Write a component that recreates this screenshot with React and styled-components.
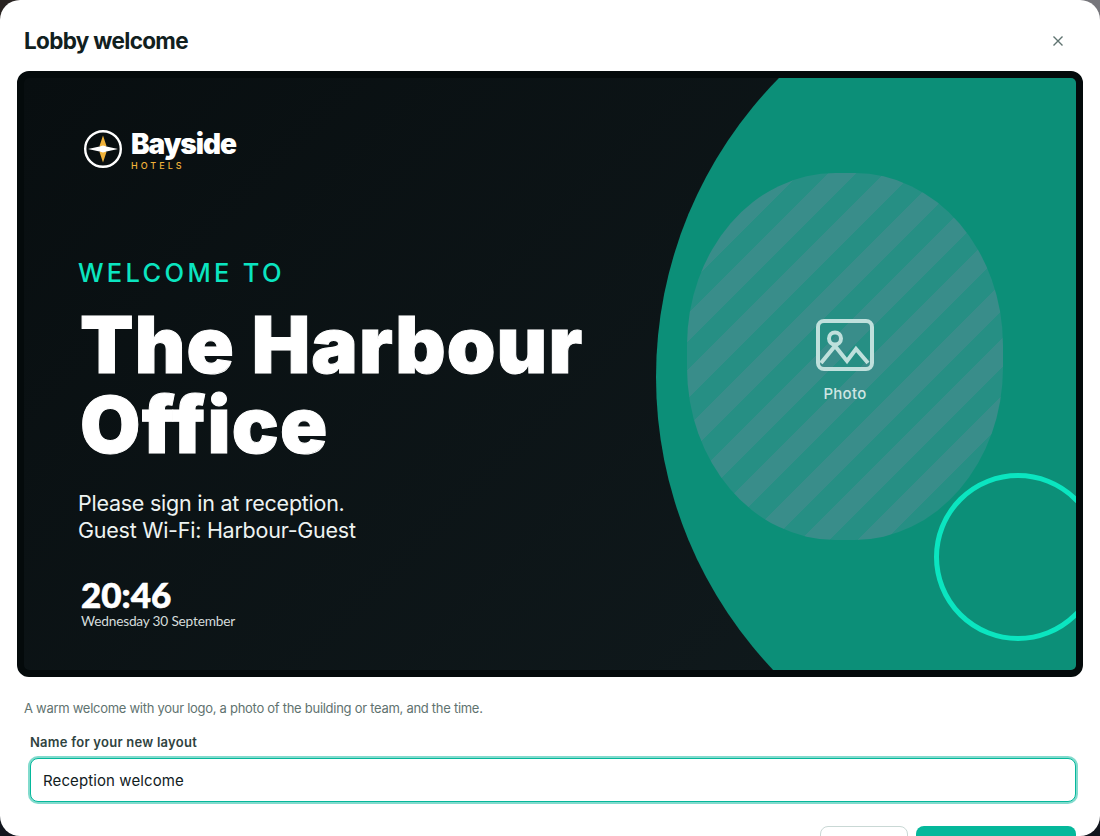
import React from "react";
import styled, { createGlobalStyle } from "styled-components";

const Global = createGlobalStyle`
  html, body { margin: 0; padding: 0; width: 1100px; height: 836px; overflow: hidden; background: #16181c; }
  * { box-sizing: border-box; }
`;

const Backdrop = styled.div`
  width: 1100px;
  height: 836px;
  background:
    linear-gradient(180deg, rgba(0, 0, 0, 0) 0%, #12161e 95%),
    linear-gradient(90deg, #2a2422 0%, #3a3a40 50%, #77777c 100%);
`;

const Modal = styled.div`
  width: 1100px;
  height: 836px;
  background: #fff;
  border-radius: 20px;
  overflow: hidden;
  font-family: Inter, sans-serif;
`;

const Header = styled.header`
  height: 71px;
  padding: 10px 24px 0;
  display: flex;
  align-items: center;
  justify-content: space-between;
`;

const Title = styled.h2`
  margin: 0;
  font-size: 22.5px;
  font-weight: 700;
  letter-spacing: -0.67px;
  color: #11201e;
`;

const Close = styled.button`
  width: 30px;
  height: 30px;
  margin-right: 3px;
  padding: 0;
  border: 0;
  background: none;
  color: #5f7370;
  display: flex;
  align-items: center;
  justify-content: center;
`;

const Stage = styled.section`
  position: relative;
  width: 1066px;
  height: 606px;
  margin-left: 17px;
  border: 7px solid #040a0b;
  border-radius: 12px;
  overflow: hidden;
  background: linear-gradient(135deg, #080e10 0%, #111b1e 100%);
  color: #fff;
  padding: 51px 0 0 54px;
  display: flex;
  flex-direction: column;
  align-items: flex-start;
`;

const Blob = styled.div`
  position: absolute;
  left: 632px;
  top: -126px;
  width: 850px;
  height: 850px;
  border-radius: 50%;
  background: #0c8f78;
`;

const Photo = styled.div`
  position: absolute;
  left: 663px;
  top: 95px;
  width: 316px;
  height: 367px;
  padding-top: 8px;
  border-radius: 47%;
  background: repeating-linear-gradient(
    135deg,
    #268f84 0 20px,
    #398d8a 20px 40px
  );
  display: flex;
  flex-direction: column;
  align-items: center;
  justify-content: center;
  gap: 13px;
  color: #cfe6e3;
  font-size: 15px;
  font-weight: 500;
  letter-spacing: 0.3px;
`;

const Ring = styled.div`
  position: absolute;
  left: 910px;
  top: 395px;
  width: 168px;
  height: 168px;
  border-radius: 50%;
  border: 5px solid #0be5c0;
`;

const Logo = styled.div`
  position: relative;
  display: flex;
  align-items: flex-start;
  gap: 8px;
  margin-left: 5px;
`;

const LogoWords = styled.div`
  display: flex;
  flex-direction: column;
`;

const LogoName = styled.span`
  font-size: 28px;
  line-height: 30px;
  font-weight: 900;
  letter-spacing: -1.1px;
`;

const LogoSub = styled.span`
  margin-top: 1px;
  font-size: 9px;
  line-height: 11px;
  font-weight: 500;
  letter-spacing: 3px;
  color: #f0b23a;
`;

const Eyebrow = styled.div`
  position: relative;
  margin-top: 86px;
  font-size: 25.5px;
  line-height: 32px;
  font-weight: 500;
  letter-spacing: 3.3px;
  color: #0be5c0;
`;

const Headline = styled.h1`
  position: relative;
  margin: 16px 0 0 2px;
  width: 540px;
  font-size: 78px;
  line-height: 80px;
  font-weight: 900;
  letter-spacing: 1.15px;
  -webkit-text-stroke: 1px #fff;
`;

const Message = styled.p`
  position: relative;
  margin: 25px 0 0;
  font-size: 21.5px;
  line-height: 27px;
  font-weight: 400;
  letter-spacing: -0.25px;
  color: #eef3f2;
`;

const Clock = styled.div`
  position: relative;
  margin: 32px 0 0 3px;
  font-family: Lato, sans-serif;
  font-size: 35px;
  line-height: 36px;
  font-weight: 900;
  -webkit-text-stroke: 0.6px #fff;
`;

const DateLine = styled.div`
  position: relative;
  margin-left: 3px;
  font-family: Lato, sans-serif;
  font-size: 13.7px;
  line-height: 18px;
  letter-spacing: -0.2px;
  color: #d5dcdb;
`;

const Note = styled.p`
  margin: 21px 0 0 24px;
  font-size: 13px;
  line-height: 20px;
  letter-spacing: -0.28px;
  color: #5f7370;
`;

const Field = styled.div`
  margin: 14px 24px 0 30px;
`;

const Label = styled.label`
  display: block;
  font-size: 13px;
  line-height: 20px;
  font-weight: 600;
  letter-spacing: 0.25px;
  color: #2f4340;
  margin-bottom: 6px;
`;

const Input = styled.input`
  display: block;
  width: 100%;
  height: 44px;
  padding: 0 12px;
  border: 1.5px solid #05b89b;
  border-radius: 8px;
  box-shadow: 0 0 0 2px rgba(5, 184, 155, 0.5);
  outline: none;
  font: 400 15px Inter, sans-serif;
  letter-spacing: 0.1px;
  color: #11201e;
  background: #fff;
`;

const Actions = styled.div`
  margin: 24px 24px 0 0;
  display: flex;
  justify-content: flex-end;
  gap: 8px;
`;

const Ghost = styled.button`
  width: 88px;
  height: 44px;
  background: #fff;
  border: 1px solid #c9d8d5;
  border-radius: 8px;
  font: 500 15px Inter, sans-serif;
`;

const Primary = styled.button`
  width: 160px;
  height: 44px;
  background: #05b89b;
  border: 0;
  border-radius: 8px;
  color: #fff;
  font: 600 15px Inter, sans-serif;
`;

const LogoMark = () => (
  <svg width="40" height="40" viewBox="0 0 40 40" aria-hidden="true">
    <circle cx="20" cy="20" r="17.8" fill="none" stroke="#fff" strokeWidth="2.4" />
    <path d="M20 6.5 L23.500 17 L20 20 L16.500 17 Z M20 33.5 L23.500 23 L20 20 L16.500 23 Z" fill="#f0b23a" />
    <path d="M5 20 L16.5 17.5 L20 16.5 L23.5 17.5 L35 20 L23.5 22.5 L20 23.5 L16.5 22.5 Z" fill="#fff" />
  </svg>
);

const PhotoIcon = () => (
  <svg width="58" height="52" viewBox="0 0 58 52" fill="none" stroke="#bfe0dc" strokeWidth="4" aria-hidden="true">
    <rect x="2" y="2" width="54" height="48" rx="6" />
    <circle cx="19" cy="19.500" r="6" />
    <path d="M5 44 L19 27 L31 42 L40 30 L52 44" strokeLinejoin="miter" />
  </svg>
);

const CloseIcon = () => (
  <svg width="16" height="16" viewBox="0 0 16 16" fill="none" stroke="currentColor" strokeWidth="1.4" aria-hidden="true">
    <path d="M3.500 3.500 L12.500 12.500 M12.500 3.500 L3.500 12.500" />
  </svg>
);

export default function App() {
  return (
    <Backdrop>
      <Global />
      <Modal>
        <Header>
          <Title>Lobby welcome</Title>
          <Close aria-label="Close"><CloseIcon /></Close>
        </Header>
        <Stage>
          <Blob />
          <Photo>
            <PhotoIcon />
            <span>Photo</span>
          </Photo>
          <Ring />
          <Logo>
            <LogoMark />
            <LogoWords>
              <LogoName>Bayside</LogoName>
              <LogoSub>HOTELS</LogoSub>
            </LogoWords>
          </Logo>
          <Eyebrow>WELCOME TO</Eyebrow>
          <Headline>The Harbour Office</Headline>
          <Message>Please sign in at reception.<br />Guest Wi-Fi: Harbour-Guest</Message>
          <Clock>20:46</Clock>
          <DateLine>Wednesday 30 September</DateLine>
        </Stage>
        <Note>A warm welcome with your logo, a photo of the building or team, and the time.</Note>
        <Field>
          <Label htmlFor="name">Name for your new layout</Label>
          <Input id="name" defaultValue="Reception welcome" />
        </Field>
        <Actions>
          <Ghost>Cancel</Ghost>
          <Primary>Create layout</Primary>
        </Actions>
      </Modal>
    </Backdrop>
  );
}
